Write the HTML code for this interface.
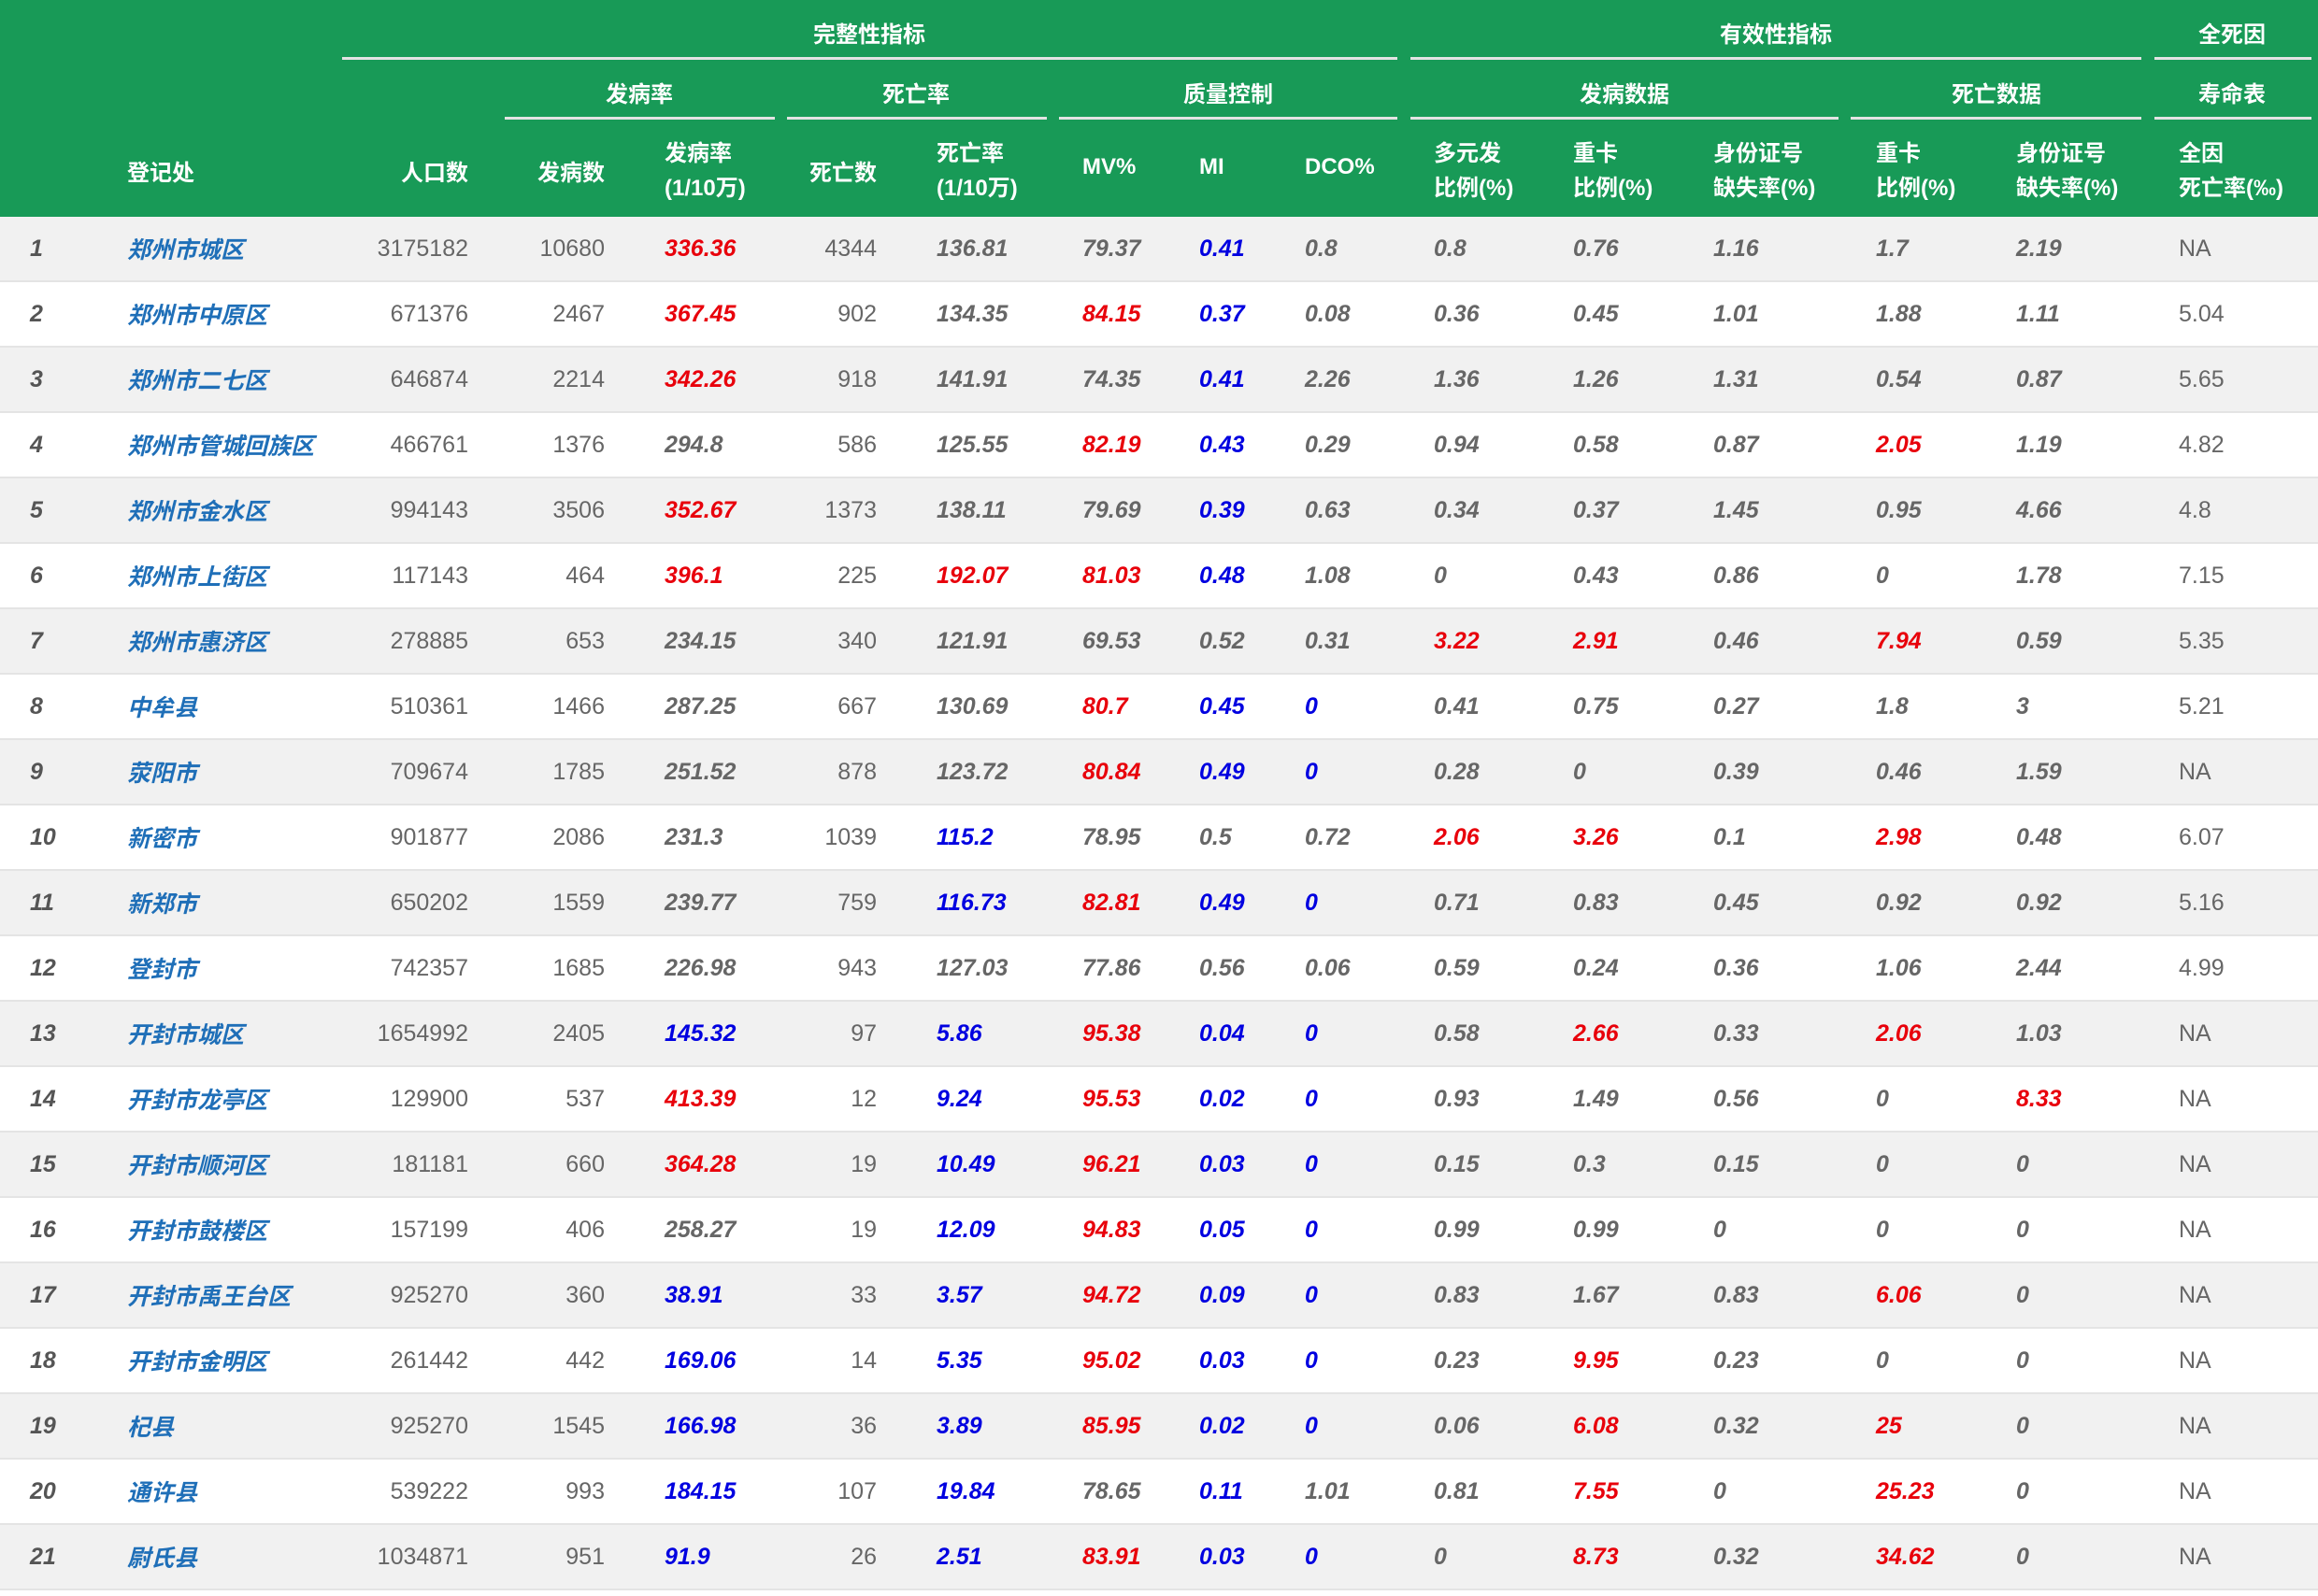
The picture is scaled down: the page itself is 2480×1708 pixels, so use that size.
<!DOCTYPE html>
<html><head><meta charset="utf-8">
<style>
*{margin:0;padding:0;box-sizing:border-box}
body{width:2480px;height:1708px;background:#fff;font-family:"Liberation Sans","Noto Sans CJK SC",sans-serif;position:relative;overflow:hidden}
.hd{position:absolute;left:0;top:0;width:2480px;height:232px;background:#189a57;color:#fff;font-weight:bold;font-size:24px}
.hd div{position:absolute;white-space:nowrap}
.ln{height:3px;background:#e3e3e3}
.t1{top:17px}
.t2{top:81px}
.h3{top:165px}
.h3b{top:146px;line-height:37px}
.rows{position:absolute;left:0;top:232px;width:2480px}
.r{display:flex;height:70px;align-items:center;font-size:25px;color:#666;border-bottom:2px solid #e4e4e4}
.r:nth-child(odd){background:#f1f1f1}
.r span{display:block;white-space:nowrap}
.c0{width:136px;padding-left:32px;font-style:italic;font-weight:bold;color:#555}
.c1{width:244px;font-style:italic;font-weight:bold;color:#1f6fb8}
.c2{width:121px;text-align:right}
.c3{width:146px;text-align:right}
.c4{width:203px;padding-left:64px}
.c5{width:88px;text-align:right}
.c6{width:220px;padding-left:64px}
.c7{width:125px}.c8{width:113px}.c9{width:138px}.c10{width:149px}.c11{width:150px}.c12{width:174px}.c13{width:150px}.c14{width:174px}
.c15{width:149px}
.c4,.c6,.c7,.c8,.c9,.c10,.c11,.c12,.c13,.c14{font-style:italic;font-weight:bold}
.R{color:#e8000b}.B{color:#0000e0}
</style></head><body>
<div class="hd">
<div class="t1" style="left:870px">完整性指标</div>
<div class="t1" style="left:1840px">有效性指标</div>
<div class="t1" style="left:2352px">全死因</div>
<div class="ln" style="top:61px;left:366px;width:1129px"></div>
<div class="ln" style="top:61px;left:1509px;width:782px"></div>
<div class="ln" style="top:61px;left:2305px;width:168px"></div>
<div class="t2" style="left:648px">发病率</div>
<div class="t2" style="left:944px">死亡率</div>
<div class="t2" style="left:1266px">质量控制</div>
<div class="t2" style="left:1690px">发病数据</div>
<div class="t2" style="left:2088px">死亡数据</div>
<div class="t2" style="left:2352px">寿命表</div>
<div class="ln" style="top:125px;left:540px;width:289px"></div>
<div class="ln" style="top:125px;left:842px;width:278px"></div>
<div class="ln" style="top:125px;left:1133px;width:362px"></div>
<div class="ln" style="top:125px;left:1509px;width:458px"></div>
<div class="ln" style="top:125px;left:1980px;width:311px"></div>
<div class="ln" style="top:125px;left:2305px;width:168px"></div>
<div class="h3" style="left:136px">登记处</div>
<div class="h3" style="left:429px">人口数</div>
<div class="h3" style="left:575px">发病数</div>
<div class="h3b" style="left:711px">发病率<br>(1/10万)</div>
<div class="h3" style="left:866px">死亡数</div>
<div class="h3b" style="left:1002px">死亡率<br>(1/10万)</div>
<div class="h3" style="left:1158px">MV%</div>
<div class="h3" style="left:1283px">MI</div>
<div class="h3" style="left:1396px">DCO%</div>
<div class="h3b" style="left:1534px">多元发<br>比例(%)</div>
<div class="h3b" style="left:1683px">重卡<br>比例(%)</div>
<div class="h3b" style="left:1833px">身份证号<br>缺失率(%)</div>
<div class="h3b" style="left:2007px">重卡<br>比例(%)</div>
<div class="h3b" style="left:2157px">身份证号<br>缺失率(%)</div>
<div class="h3b" style="left:2331px">全因<br>死亡率(‰)</div>
</div>
<div class="rows">
<div class="r"><span class="c0">1</span><span class="c1">郑州市城区</span><span class="c2">3175182</span><span class="c3">10680</span><span class="c4 R">336.36</span><span class="c5">4344</span><span class="c6">136.81</span><span class="c7">79.37</span><span class="c8 B">0.41</span><span class="c9">0.8</span><span class="c10">0.8</span><span class="c11">0.76</span><span class="c12">1.16</span><span class="c13">1.7</span><span class="c14">2.19</span><span class="c15">NA</span></div>
<div class="r"><span class="c0">2</span><span class="c1">郑州市中原区</span><span class="c2">671376</span><span class="c3">2467</span><span class="c4 R">367.45</span><span class="c5">902</span><span class="c6">134.35</span><span class="c7 R">84.15</span><span class="c8 B">0.37</span><span class="c9">0.08</span><span class="c10">0.36</span><span class="c11">0.45</span><span class="c12">1.01</span><span class="c13">1.88</span><span class="c14">1.11</span><span class="c15">5.04</span></div>
<div class="r"><span class="c0">3</span><span class="c1">郑州市二七区</span><span class="c2">646874</span><span class="c3">2214</span><span class="c4 R">342.26</span><span class="c5">918</span><span class="c6">141.91</span><span class="c7">74.35</span><span class="c8 B">0.41</span><span class="c9">2.26</span><span class="c10">1.36</span><span class="c11">1.26</span><span class="c12">1.31</span><span class="c13">0.54</span><span class="c14">0.87</span><span class="c15">5.65</span></div>
<div class="r"><span class="c0">4</span><span class="c1">郑州市管城回族区</span><span class="c2">466761</span><span class="c3">1376</span><span class="c4">294.8</span><span class="c5">586</span><span class="c6">125.55</span><span class="c7 R">82.19</span><span class="c8 B">0.43</span><span class="c9">0.29</span><span class="c10">0.94</span><span class="c11">0.58</span><span class="c12">0.87</span><span class="c13 R">2.05</span><span class="c14">1.19</span><span class="c15">4.82</span></div>
<div class="r"><span class="c0">5</span><span class="c1">郑州市金水区</span><span class="c2">994143</span><span class="c3">3506</span><span class="c4 R">352.67</span><span class="c5">1373</span><span class="c6">138.11</span><span class="c7">79.69</span><span class="c8 B">0.39</span><span class="c9">0.63</span><span class="c10">0.34</span><span class="c11">0.37</span><span class="c12">1.45</span><span class="c13">0.95</span><span class="c14">4.66</span><span class="c15">4.8</span></div>
<div class="r"><span class="c0">6</span><span class="c1">郑州市上街区</span><span class="c2">117143</span><span class="c3">464</span><span class="c4 R">396.1</span><span class="c5">225</span><span class="c6 R">192.07</span><span class="c7 R">81.03</span><span class="c8 B">0.48</span><span class="c9">1.08</span><span class="c10">0</span><span class="c11">0.43</span><span class="c12">0.86</span><span class="c13">0</span><span class="c14">1.78</span><span class="c15">7.15</span></div>
<div class="r"><span class="c0">7</span><span class="c1">郑州市惠济区</span><span class="c2">278885</span><span class="c3">653</span><span class="c4">234.15</span><span class="c5">340</span><span class="c6">121.91</span><span class="c7">69.53</span><span class="c8">0.52</span><span class="c9">0.31</span><span class="c10 R">3.22</span><span class="c11 R">2.91</span><span class="c12">0.46</span><span class="c13 R">7.94</span><span class="c14">0.59</span><span class="c15">5.35</span></div>
<div class="r"><span class="c0">8</span><span class="c1">中牟县</span><span class="c2">510361</span><span class="c3">1466</span><span class="c4">287.25</span><span class="c5">667</span><span class="c6">130.69</span><span class="c7 R">80.7</span><span class="c8 B">0.45</span><span class="c9 B">0</span><span class="c10">0.41</span><span class="c11">0.75</span><span class="c12">0.27</span><span class="c13">1.8</span><span class="c14">3</span><span class="c15">5.21</span></div>
<div class="r"><span class="c0">9</span><span class="c1">荥阳市</span><span class="c2">709674</span><span class="c3">1785</span><span class="c4">251.52</span><span class="c5">878</span><span class="c6">123.72</span><span class="c7 R">80.84</span><span class="c8 B">0.49</span><span class="c9 B">0</span><span class="c10">0.28</span><span class="c11">0</span><span class="c12">0.39</span><span class="c13">0.46</span><span class="c14">1.59</span><span class="c15">NA</span></div>
<div class="r"><span class="c0">10</span><span class="c1">新密市</span><span class="c2">901877</span><span class="c3">2086</span><span class="c4">231.3</span><span class="c5">1039</span><span class="c6 B">115.2</span><span class="c7">78.95</span><span class="c8">0.5</span><span class="c9">0.72</span><span class="c10 R">2.06</span><span class="c11 R">3.26</span><span class="c12">0.1</span><span class="c13 R">2.98</span><span class="c14">0.48</span><span class="c15">6.07</span></div>
<div class="r"><span class="c0">11</span><span class="c1">新郑市</span><span class="c2">650202</span><span class="c3">1559</span><span class="c4">239.77</span><span class="c5">759</span><span class="c6 B">116.73</span><span class="c7 R">82.81</span><span class="c8 B">0.49</span><span class="c9 B">0</span><span class="c10">0.71</span><span class="c11">0.83</span><span class="c12">0.45</span><span class="c13">0.92</span><span class="c14">0.92</span><span class="c15">5.16</span></div>
<div class="r"><span class="c0">12</span><span class="c1">登封市</span><span class="c2">742357</span><span class="c3">1685</span><span class="c4">226.98</span><span class="c5">943</span><span class="c6">127.03</span><span class="c7">77.86</span><span class="c8">0.56</span><span class="c9">0.06</span><span class="c10">0.59</span><span class="c11">0.24</span><span class="c12">0.36</span><span class="c13">1.06</span><span class="c14">2.44</span><span class="c15">4.99</span></div>
<div class="r"><span class="c0">13</span><span class="c1">开封市城区</span><span class="c2">1654992</span><span class="c3">2405</span><span class="c4 B">145.32</span><span class="c5">97</span><span class="c6 B">5.86</span><span class="c7 R">95.38</span><span class="c8 B">0.04</span><span class="c9 B">0</span><span class="c10">0.58</span><span class="c11 R">2.66</span><span class="c12">0.33</span><span class="c13 R">2.06</span><span class="c14">1.03</span><span class="c15">NA</span></div>
<div class="r"><span class="c0">14</span><span class="c1">开封市龙亭区</span><span class="c2">129900</span><span class="c3">537</span><span class="c4 R">413.39</span><span class="c5">12</span><span class="c6 B">9.24</span><span class="c7 R">95.53</span><span class="c8 B">0.02</span><span class="c9 B">0</span><span class="c10">0.93</span><span class="c11">1.49</span><span class="c12">0.56</span><span class="c13">0</span><span class="c14 R">8.33</span><span class="c15">NA</span></div>
<div class="r"><span class="c0">15</span><span class="c1">开封市顺河区</span><span class="c2">181181</span><span class="c3">660</span><span class="c4 R">364.28</span><span class="c5">19</span><span class="c6 B">10.49</span><span class="c7 R">96.21</span><span class="c8 B">0.03</span><span class="c9 B">0</span><span class="c10">0.15</span><span class="c11">0.3</span><span class="c12">0.15</span><span class="c13">0</span><span class="c14">0</span><span class="c15">NA</span></div>
<div class="r"><span class="c0">16</span><span class="c1">开封市鼓楼区</span><span class="c2">157199</span><span class="c3">406</span><span class="c4">258.27</span><span class="c5">19</span><span class="c6 B">12.09</span><span class="c7 R">94.83</span><span class="c8 B">0.05</span><span class="c9 B">0</span><span class="c10">0.99</span><span class="c11">0.99</span><span class="c12">0</span><span class="c13">0</span><span class="c14">0</span><span class="c15">NA</span></div>
<div class="r"><span class="c0">17</span><span class="c1">开封市禹王台区</span><span class="c2">925270</span><span class="c3">360</span><span class="c4 B">38.91</span><span class="c5">33</span><span class="c6 B">3.57</span><span class="c7 R">94.72</span><span class="c8 B">0.09</span><span class="c9 B">0</span><span class="c10">0.83</span><span class="c11">1.67</span><span class="c12">0.83</span><span class="c13 R">6.06</span><span class="c14">0</span><span class="c15">NA</span></div>
<div class="r"><span class="c0">18</span><span class="c1">开封市金明区</span><span class="c2">261442</span><span class="c3">442</span><span class="c4 B">169.06</span><span class="c5">14</span><span class="c6 B">5.35</span><span class="c7 R">95.02</span><span class="c8 B">0.03</span><span class="c9 B">0</span><span class="c10">0.23</span><span class="c11 R">9.95</span><span class="c12">0.23</span><span class="c13">0</span><span class="c14">0</span><span class="c15">NA</span></div>
<div class="r"><span class="c0">19</span><span class="c1">杞县</span><span class="c2">925270</span><span class="c3">1545</span><span class="c4 B">166.98</span><span class="c5">36</span><span class="c6 B">3.89</span><span class="c7 R">85.95</span><span class="c8 B">0.02</span><span class="c9 B">0</span><span class="c10">0.06</span><span class="c11 R">6.08</span><span class="c12">0.32</span><span class="c13 R">25</span><span class="c14">0</span><span class="c15">NA</span></div>
<div class="r"><span class="c0">20</span><span class="c1">通许县</span><span class="c2">539222</span><span class="c3">993</span><span class="c4 B">184.15</span><span class="c5">107</span><span class="c6 B">19.84</span><span class="c7">78.65</span><span class="c8 B">0.11</span><span class="c9">1.01</span><span class="c10">0.81</span><span class="c11 R">7.55</span><span class="c12">0</span><span class="c13 R">25.23</span><span class="c14">0</span><span class="c15">NA</span></div>
<div class="r"><span class="c0">21</span><span class="c1">尉氏县</span><span class="c2">1034871</span><span class="c3">951</span><span class="c4 B">91.9</span><span class="c5">26</span><span class="c6 B">2.51</span><span class="c7 R">83.91</span><span class="c8 B">0.03</span><span class="c9 B">0</span><span class="c10">0</span><span class="c11 R">8.73</span><span class="c12">0.32</span><span class="c13 R">34.62</span><span class="c14">0</span><span class="c15">NA</span></div>
</div>
</body></html>
